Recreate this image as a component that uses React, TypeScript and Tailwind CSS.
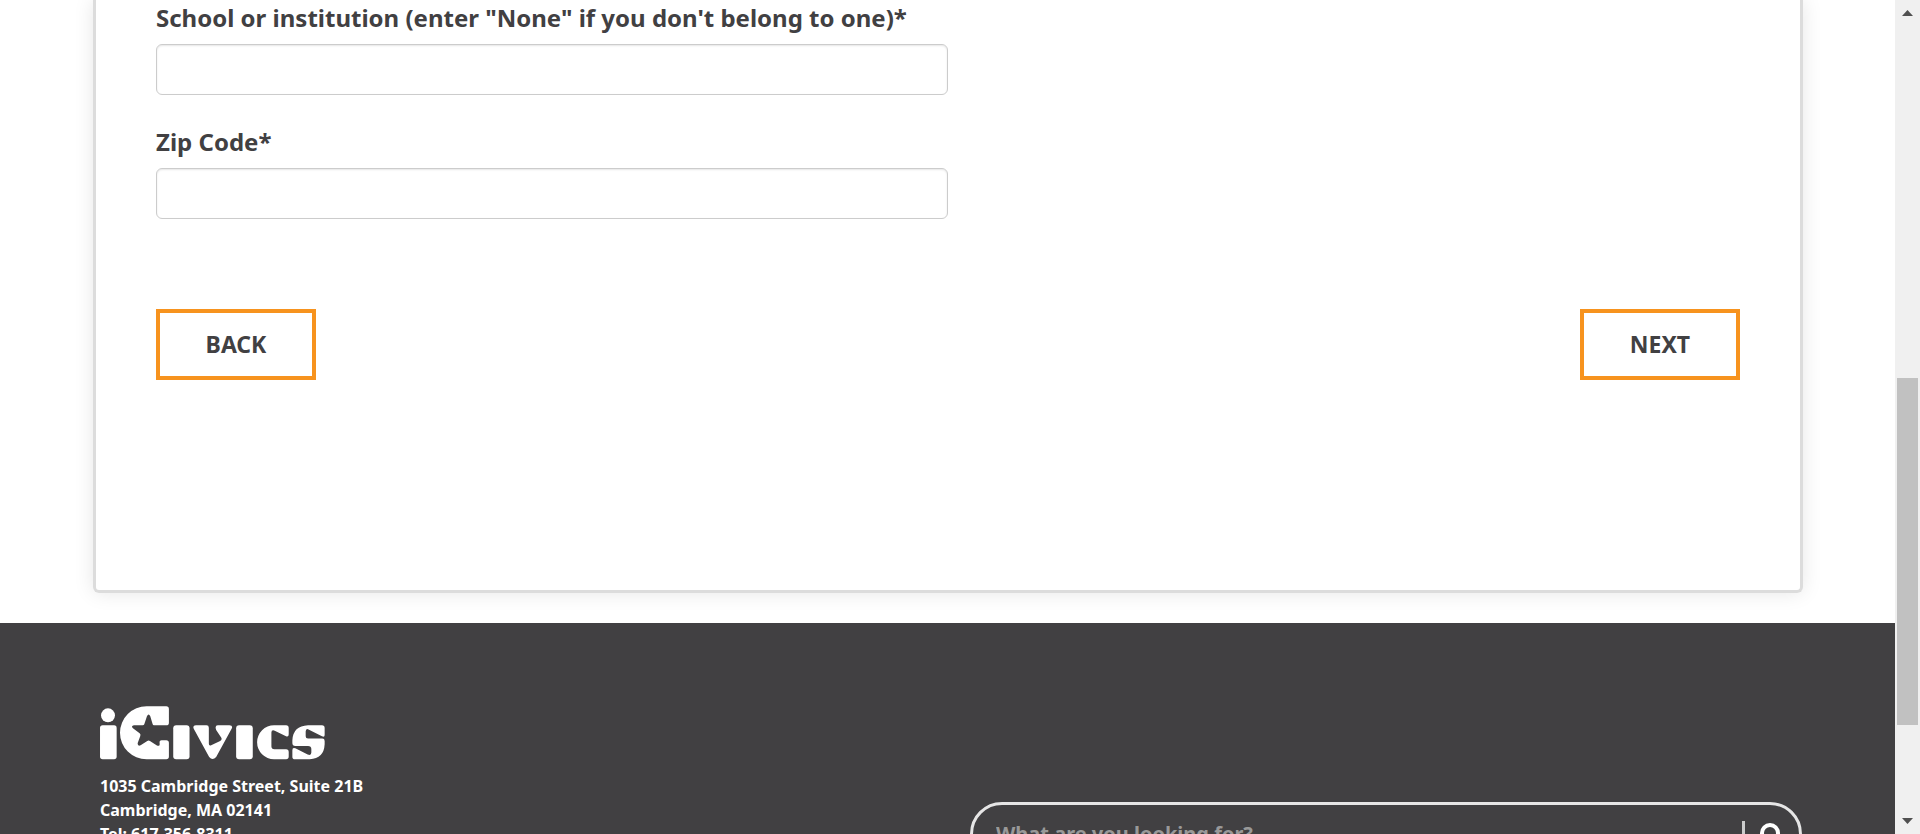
import { Search } from "lucide-react";

function Logo() {
  return (
    <svg viewBox="60 47 676 161" className="block w-[225px]" fill="#fff" role="img" aria-label="iCivics">
      <circle cx="84" cy="75" r="21" />
      <rect x="60" y="105" width="50" height="102" rx="8" />
      <path d="M200 48H259Q267 48 267 56V97Q267 105 259 105H222Q219 105 218 101L211 78Q206 67 201 78L193 102Q192 105 188 105H162Q152 107 159 114L179 129Q183 132 181 137L173 159Q173 169 182 165L202 152Q206 149 210 152L231 166Q241 169 239 158Q238 150 245 150H259Q267 150 267 158V199Q267 207 259 207H200A80 79.500 0 0 1 200 48Z" />
      <rect x="280" y="105" width="49" height="102" rx="9" />
      <path d="M348 105H380Q387 105 387 112V160Q387 168 394 165L421 152Q428 148 424 142L409 119Q404 105 414 105H449Q461 105 455 116L409 200Q398 212 388 200L342 116Q337 105 348 105Z" />
      <rect x="469" y="105" width="50" height="102" rx="9" />
      <path d="M583 105H619Q627 105 627 113V132Q627 141 619 138L585 121Q575 117 575 127V168Q575 177 584 177H619Q627 177 627 185V199Q627 207 619 207H583A51 51 0 0 1 583 105Z" />
      <path d="M685 105H727Q735 105 735 113V134Q735 142 727 138L688 118Q678 113 678 124V138Q678 145 685 145H728Q735 145 735 152V162Q733 205 690 207H646Q638 207 638 200V180Q638 170 647 174L684 193Q695 197 695 187V176Q695 167 685 167H647Q638 167 638 158V150Q640 107 685 105Z" />
    </svg>
  );
}

function Field({ id, label }: { id: string; label: string }) {
  return (
    <div className="w-1/2">
      <label htmlFor={id} className="mb-[10px] block text-2xl leading-8 font-bold whitespace-nowrap">
        {label}
      </label>
      <input
        id={id}
        type="text"
        className="block h-[51px] w-full rounded-md border border-[#ccc] bg-white px-3 text-xl shadow-[inset_0_1px_2px_rgba(0,0,0,0.1)]"
      />
    </div>
  );
}

function FormButton({ children }: { children: string }) {
  return (
    <button type="button" className="h-[71px] w-40 border-4 border-[#f7931e] bg-white text-[23px] font-bold">
      {children}
    </button>
  );
}

function Scrollbar() {
  return (
    <div className="flex w-[25px] shrink-0 flex-col items-center justify-between bg-[#f0f0f0] py-[10px]" aria-hidden="true">
      <svg viewBox="0 0 11 6" className="w-[11px]" fill="#505050"><path d="M5.500 0L11 6H0Z" /></svg>
      <div className="mt-[269px] h-[347px] w-[21px] bg-[#c1c1c1]" />
      <svg viewBox="0 0 11 6" className="w-[11px]" fill="#505050"><path d="M5.500 6L11 0H0Z" /></svg>
    </div>
  );
}

export default function App() {
  return (
    <div className="flex h-screen overflow-hidden bg-white font-['Noto_Sans',sans-serif] text-[#414042]">
      <div className="flex min-w-0 flex-1 flex-col overflow-hidden">
        <main className="shrink-0 pr-[92px] pb-[30px] pl-[93px]">
          <form className="rounded-b-md border-3 border-t-0 border-[#dcdcdc] px-[60px] pt-[2px] pb-[210px] shadow-[0_0_20px_rgba(0,0,0,0.1)]">
            <div className="flex flex-col gap-[31px]">
              <Field id="school" label={'School or institution (enter "None" if you don\'t belong to one)*'} />
              <Field id="zip" label="Zip Code*" />
            </div>
            <div className="mt-[90px] flex justify-between">
              <FormButton>BACK</FormButton>
              <FormButton>NEXT</FormButton>
            </div>
          </form>
        </main>
        <footer className="flex flex-1 shrink-0 items-start justify-between bg-[#414042] pt-[83px] pr-[93px] pl-[100px]">
          <div>
            <Logo />
            <address className="mt-[14px] text-base leading-6 font-bold whitespace-nowrap text-white not-italic">
              1035 Cambridge Street, Suite 21B
              <br />
              Cambridge, MA 02141
              <br />
              Tel: 617-356-8311
            </address>
          </div>
          <form role="search" className="mt-24 flex h-16 w-[832px] items-center rounded-[32px] border-3 border-[#e6e6e6] pr-4 pl-[23px]">
            <input
              type="text"
              aria-label="What are you looking for?"
              placeholder="What are you looking for?"
              className="min-w-0 flex-1 text-xl font-bold text-white placeholder:text-[#999]"
            />
            <button type="submit" aria-label="Search" className="border-l-3 border-[#ccc] py-px pl-[14px] text-white">
              <Search className="size-6" strokeWidth={4} />
            </button>
          </form>
        </footer>
      </div>
      <Scrollbar />
    </div>
  );
}
